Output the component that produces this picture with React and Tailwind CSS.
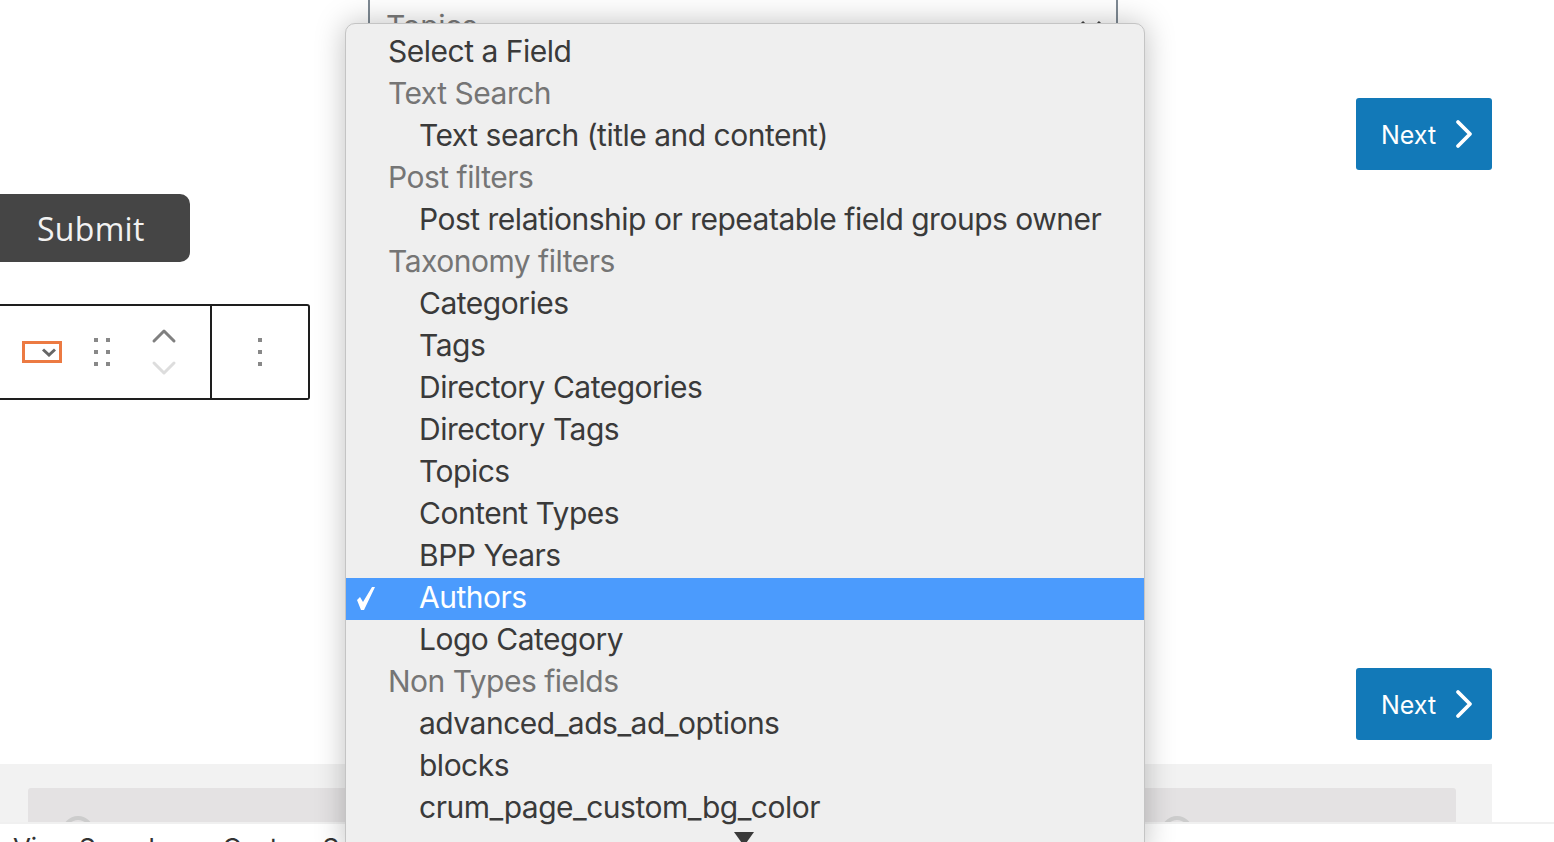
import { ChevronDown, ChevronUp, ChevronRight } from 'lucide-react';

const MENU = [
  { label: 'Select a Field', level: 'top' },
  { label: 'Text Search', level: 'group' },
  { label: 'Text search (title and content)' },
  { label: 'Post filters', level: 'group' },
  { label: 'Post relationship or repeatable field groups owner' },
  { label: 'Taxonomy filters', level: 'group' },
  { label: 'Categories' },
  { label: 'Tags' },
  { label: 'Directory Categories' },
  { label: 'Directory Tags' },
  { label: 'Topics' },
  { label: 'Content Types' },
  { label: 'BPP Years' },
  { label: 'Authors', selected: true },
  { label: 'Logo Category' },
  { label: 'Non Types fields', level: 'group' },
  { label: 'advanced_ads_ad_options' },
  { label: 'blocks' },
  { label: 'crum_page_custom_bg_color' },
];

const NextButton = () => (
  <button className="flex h-[72px] w-[136px] items-center gap-[4px] rounded-[3px] bg-[#1279b8] pl-[25px] font-['Inter',sans-serif] text-[25px] text-white">
    <span className="pt-[3px]">Next</span>
    <ChevronRight size={48} strokeWidth={1.9} />
  </button>
);

const Dots = ({ cols = 2 }) => (
  <div className={cols === 2 ? 'grid grid-cols-2 gap-x-[8px] gap-y-[8px]' : 'grid grid-cols-1 gap-y-[8px]'}>
    {Array.from({ length: cols * 3 }).map((_, i) => (
      <span key={i} className="h-[4px] w-[4px] bg-[#888888]" />
    ))}
  </div>
);

const Toolbar = () => (
  <div className="mt-[42px] flex h-[96px] w-[310px] rounded-r-[3px] border-y-2 border-r-2 border-[#1e1e1e] bg-white">
    <div className="flex w-[212px] items-center border-r-2 border-[#1e1e1e] pl-[22px]">
      <div className="flex h-[22px] w-[40px] items-center justify-end border-[3px] border-[#ec7a42] pr-[3px]">
        <svg width="14" height="9" viewBox="0 0 14 9" fill="none">
          <path d="M1 1.5l6 5.5 6-5.5" stroke="#666666" strokeWidth="3" />
        </svg>
      </div>
      <div className="ml-[32px]">
        <Dots />
      </div>
      <div className="ml-[34px] flex flex-col">
        <ChevronUp size={40} strokeWidth={1.8} className="-mb-[8px] text-[#808080]" />
        <ChevronDown size={40} strokeWidth={1.8} className="text-[#dddddd]" />
      </div>
    </div>
    <div className="flex flex-1 items-center justify-center">
      <Dots cols={1} />
    </div>
  </div>
);

const Dropdown = () => (
  <div className="absolute left-[345px] top-[23px] h-[830px] w-[800px] rounded-t-[10px] border border-[#c4c4c4] bg-[#efefef] pt-[8px] font-['Inter',sans-serif] text-[30px] leading-[38px] tracking-[-0.5px] text-[#3a3a3a] shadow-[0_0_30px_rgba(0,0,0,0.25)]">
    {MENU.map((item) => (
      <div
        key={item.label}
        className={
          item.selected
            ? 'relative h-[42px] whitespace-nowrap bg-[#4b9bfd] pl-[73px] text-white'
            : item.level === 'group'
              ? 'h-[42px] whitespace-nowrap pl-[42px] text-[#757575]'
              : item.level === 'top'
                ? 'h-[42px] whitespace-nowrap pl-[42px]'
                : 'h-[42px] whitespace-nowrap pl-[73px]'
        }
      >
        {item.selected && (
          <svg className="absolute left-[11px] top-[9px]" width="18" height="23" viewBox="0 0 18 23" fill="white">
            <path d="M0 13L3 10L6 15L15 0L18 0L7 23L4 23Z" />
          </svg>
        )}
        {item.label}
      </div>
    ))}
    <div className="absolute left-[388px] top-[808px] h-0 w-0 border-x-[10px] border-t-[14px] border-x-transparent border-t-[#3a3a3a]" />
  </div>
);

export default function App() {
  return (
    <div className="relative flex h-[842px] w-[1554px] flex-col overflow-hidden bg-white">
      <div className="flex h-[764px]">
        <div className="w-[368px] pt-[194px]">
          <button className="flex h-[68px] w-[190px] items-center rounded-r-[10px] bg-[#454545] pl-[37px] pt-[2px] font-['Open_Sans',sans-serif] text-[32px] tracking-[0.3px] text-[#f2f2f2]">
            Submit
          </button>
          <Toolbar />
        </div>
        <div className="flex h-[40px] w-[750px] justify-between border-x-2 border-[#7e8993] pl-[16px] pr-[14px] pt-[8px] font-['Inter',sans-serif] text-[30px] leading-[36px] tracking-[-0.4px] text-[#7a7a7a]">
          <span>Topics</span>
          <svg className="mt-[12px]" width="22" height="14" viewBox="0 0 22 14" fill="none">
            <path d="M2 2l9 9 9-9" stroke="#444444" strokeWidth="3" />
          </svg>
        </div>
        <div className="ml-[238px] flex flex-col pt-[98px]">
          <NextButton />
          <div className="mt-[498px]">
            <NextButton />
          </div>
        </div>
      </div>
      <div className="h-[58px] w-[1492px] bg-[#f2f2f2] pl-[28px] pt-[24px]">
        <div className="flex h-[34px] w-[1428px] justify-between rounded-t-[3px] bg-[#e4e2e3] px-[34px] pt-[28px]">
          <span className="h-[32px] w-[32px] rounded-full border-[4px] border-[#cccccc]" />
          <span className="mr-[229px] h-[32px] w-[32px] rounded-full border-[4px] border-[#cccccc]" />
        </div>
      </div>
      <div className="relative flex h-[20px] gap-[59px] whitespace-nowrap border-t-2 border-[#f0f0f0] bg-white pl-[13px] pt-[8px] font-['Inter',sans-serif] text-[26px] leading-[32px] tracking-[-0.3px] text-[#333333]">
        <span>View Search</span>
        <span>Custom S</span>
      </div>
      <Dropdown />
    </div>
  );
}
